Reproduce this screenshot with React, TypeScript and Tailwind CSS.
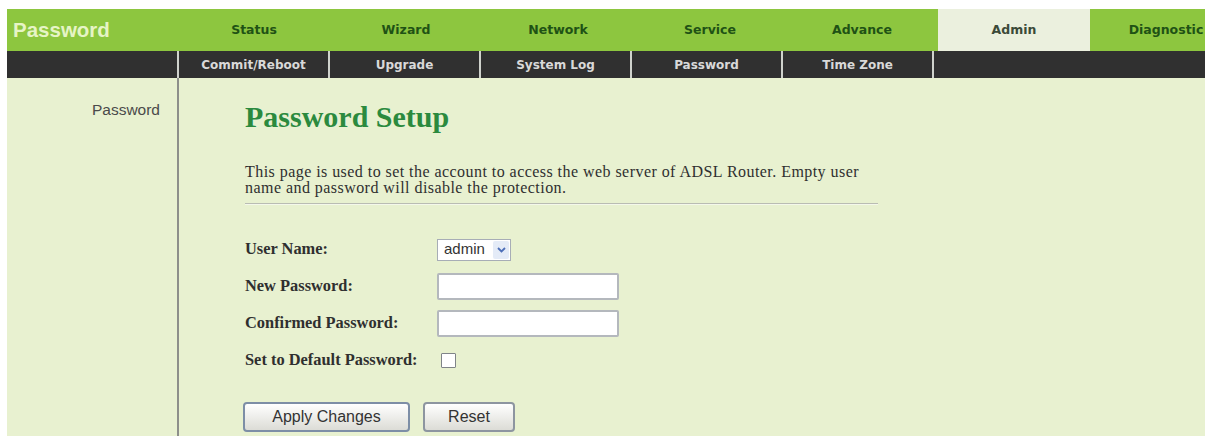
import { useState } from "react";

const tabs = ["Status", "Wizard", "Network", "Service", "Advance", "Admin", "Diagnostic"];
const subTabs = ["Commit/Reboot", "Upgrade", "System Log", "Password", "Time Zone"];

export default function App() {
  const [isDefault, setIsDefault] = useState(false);

  return (
    <div className="w-[1212px] h-[445px] bg-white pt-[9px] pl-[7px] overflow-hidden">
      <div className="w-[1198px]">
        {/* Top menu */}
        <div className="flex h-[42px] bg-[#8dc63f] overflow-hidden">
          <div className="w-[171px] shrink-0 flex items-center pl-[6px] font-['Liberation_Sans',Arial,sans-serif] font-bold text-[20.5px] text-[#e6f4c6]">
            Password
          </div>
          {tabs.map((t) => (
            <div
              key={t}
              className={`w-[152px] shrink-0 flex items-center justify-center font-['DejaVu_Sans',Verdana,sans-serif] font-bold text-[12.5px] ${
                t === "Admin" ? "bg-[#ebf0de] text-[#3b4a38]" : "text-[#1f5215]"
              }`}
            >
              {t}
            </div>
          ))}
        </div>

        {/* Sub menu */}
        <div className="flex h-[27px] bg-[#303030]">
          <div className="w-[170px] shrink-0" />
          {subTabs.map((t) => (
            <div
              key={t}
              className="w-[151px] shrink-0 border-l-2 border-[#cfd2cc] flex items-center justify-center font-['DejaVu_Sans',Verdana,sans-serif] font-bold text-[12px] text-[#d9d9d9]"
            >
              {t}
            </div>
          ))}
          <div className="flex-1 border-l-2 border-[#cfd2cc]" />
        </div>

        {/* Body */}
        <div className="flex h-[358px] bg-[#e8f1d0]">
          <div className="w-[172px] shrink-0 border-r-2 border-[#8d8f8a] text-right pr-[17px] pt-[23px] font-['Liberation_Sans',Arial,sans-serif] text-[15.5px] leading-[18px] text-[#4a4a4a]">
            Password
          </div>

          <div className="flex-1 pl-[66px] pt-[21px] font-['Liberation_Serif','Times_New_Roman',serif]">
            <h1 className="text-[30px] leading-[35px] font-bold text-[#2b8a3e]">Password Setup</h1>
            <p className="mt-[30px] whitespace-nowrap text-[16px] tracking-[0.45px] leading-[16px] text-[#2f2f2f]">
              This page is used to set the account to access the web server of ADSL Router. Empty user
              <br />
              name and password will disable the protection.
            </p>
            <div className="mt-[7px] w-[633px] h-[2px] border-t border-[#b9bcb3] border-b-[1px] border-b-[#f4f8ea]" />

            <div className="mt-[26px] text-[16.4px] font-bold text-[#2f2f2f]">
              <div className="flex items-center h-[37px]">
                <div className="w-[192px]">User Name:</div>
                <div className="flex items-center w-[74px] h-[22px] bg-white border border-[#a7adb6] pl-[6px] font-['Liberation_Sans',Arial,sans-serif] font-normal text-[15px] text-[#333]">
                  <span className="flex-1">admin</span>
                  <span className="w-[16px] h-[18px] mr-[1px] flex items-center justify-center bg-[#e4ebf7] rounded-[2px]">
                    <svg width="9" height="7" viewBox="0 0 9 7">
                      <path d="M1 2 L4.5 5.5 L8 2" fill="none" stroke="#4d6fb8" strokeWidth="1.8" />
                    </svg>
                  </span>
                </div>
              </div>
              <div className="flex items-center h-[37px]">
                <div className="w-[192px]">New Password:</div>
                <input
                  type="password"
                  className="w-[182px] h-[27px] bg-white border-2 border-[#b4b8bd] rounded-[2px] outline-none"
                />
              </div>
              <div className="flex items-center h-[37px]">
                <div className="w-[192px]">Confirmed Password:</div>
                <input
                  type="password"
                  className="w-[182px] h-[27px] bg-white border-2 border-[#b4b8bd] rounded-[2px] outline-none"
                />
              </div>
              <div className="flex items-center h-[37px]">
                <div className="w-[196px]">Set to Default Password:</div>
                <button
                  onClick={() => setIsDefault(!isDefault)}
                  className="w-[15px] h-[15px] bg-white border border-[#7f8488] rounded-[1px] flex items-center justify-center text-[11px] leading-none"
                >
                  {isDefault ? "✓" : ""}
                </button>
              </div>
            </div>

            <div className="mt-[23px] ml-[-2px] flex gap-[13px] font-['Liberation_Sans',Arial,sans-serif] text-[16px] text-[#333]">
              <button className="w-[167px] h-[30px] rounded-[4px] border-2 border-[#7d8ea6] bg-gradient-to-b from-white to-[#dcdcd6]">
                Apply Changes
              </button>
              <button className="w-[92px] h-[30px] rounded-[4px] border-2 border-[#8d95a0] bg-gradient-to-b from-white to-[#dcdcd6]">
                Reset
              </button>
            </div>
          </div>
        </div>
      </div>
    </div>
  );
}
